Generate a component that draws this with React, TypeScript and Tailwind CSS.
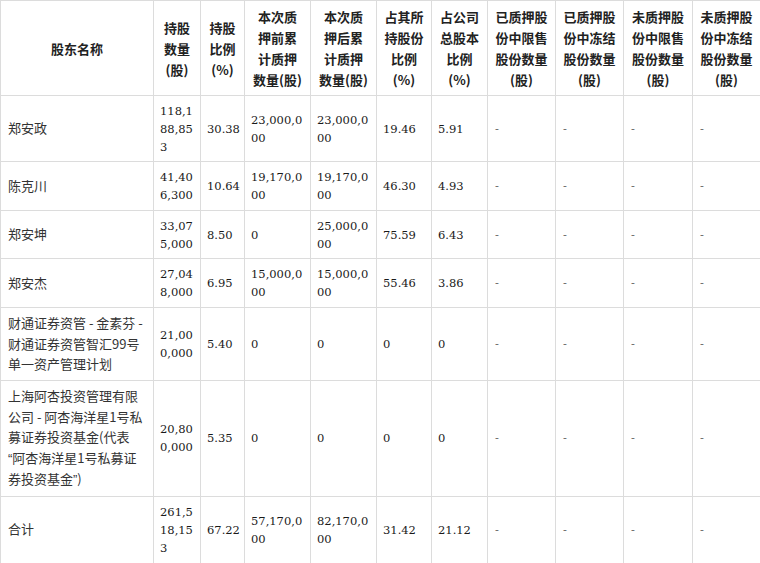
import React from "react";

const cols = [153, 47, 44, 66, 66, 55, 56, 68, 68, 69, 68];

const headers: string[][] = [
  ["股东名称"],
  ["持股", "数量", "(股)"],
  ["持股", "比例", "(%)"],
  ["本次质", "押前累", "计质押", "数量(股)"],
  ["本次质", "押后累", "计质押", "数量(股)"],
  ["占其所", "持股份", "比例", "(%)"],
  ["占公司", "总股本", "比例", "(%)"],
  ["已质押股", "份中限售", "股份数量", "(股)"],
  ["已质押股", "份中冻结", "股份数量", "(股)"],
  ["未质押股", "份中限售", "股份数量", "(股)"],
  ["未质押股", "份中冻结", "股份数量", "(股)"],
];

type Row = { h: number; name: React.ReactNode[]; nums: string[][] };

const q = "font-['Liberation_Sans',sans-serif]";

const rows: Row[] = [
  { h: 66, name: ["郑安政"], nums: [["118,1", "88,85", "3"], ["30.38"], ["23,000,0", "00"], ["23,000,0", "00"], ["19.46"], ["5.91"]] },
  { h: 49, name: ["陈克川"], nums: [["41,40", "6,300"], ["10.64"], ["19,170,0", "00"], ["19,170,0", "00"], ["46.30"], ["4.93"]] },
  { h: 48, name: ["郑安坤"], nums: [["33,07", "5,000"], ["8.50"], ["0"], ["25,000,0", "00"], ["75.59"], ["6.43"]] },
  { h: 49, name: ["郑安杰"], nums: [["27,04", "8,000"], ["6.95"], ["15,000,0", "00"], ["15,000,0", "00"], ["55.46"], ["3.86"]] },
  {
    h: 73,
    name: ["财通证券资管 - 金素芬 -", "财通证券资管智汇99号", "单一资产管理计划"],
    nums: [["21,00", "0,000"], ["5.40"], ["0"], ["0"], ["0"], ["0"]],
  },
  {
    h: 115,
    name: [
      "上海阿杏投资管理有限",
      "公司 - 阿杏海洋星1号私",
      "募证券投资基金(代表",
      <>
        <span className={q}>“</span>阿杏海洋星1号私募证
      </>,
      <>
        券投资基金<span className={q}>”</span>)
      </>,
    ],
    nums: [["20,80", "0,000"], ["5.35"], ["0"], ["0"], ["0"], ["0"]],
  },
  { h: 67, name: ["合计"], nums: [["261,5", "18,15", "3"], ["67.22"], ["57,170,0", "00"], ["82,170,0", "00"], ["31.42"], ["21.12"]] },
];

const cjk = "font-['Noto_Sans_CJK_SC',sans-serif]";
const num = "font-['DejaVu_Serif','Noto_Sans_CJK_SC',serif]";

export default function App() {
  return (
    <div className="bg-white w-[760px] h-[563px] overflow-hidden">
      <table className="border-collapse table-fixed w-[760px] text-[#333]">
        <colgroup>
          {cols.map((w, i) => (
            <col key={i} style={{ width: w }} />
          ))}
        </colgroup>
        <thead>
          <tr className="h-[94px]">
            {headers.map((lines, i) => (
              <th
                key={i}
                className={`border border-[#dcdcdc] px-1 py-[5px] text-center align-middle font-bold text-[13px] leading-[21px] whitespace-nowrap text-[#222] ${cjk}`}
              >
                {lines.map((l, j) => (
                  <div key={j}>{l}</div>
                ))}
              </th>
            ))}
          </tr>
        </thead>
        <tbody>
          {rows.map((r, i) => (
            <tr key={i} style={{ height: r.h }}>
              <td className={`border border-[#dcdcdc] pl-[7px] pr-1 py-[5px] align-middle text-[13px] leading-[20.5px] whitespace-nowrap ${cjk}`}>
                {r.name.map((l, j) => (
                  <div key={j}>{l}</div>
                ))}
              </td>
              {r.nums.map((lines, j) => (
                <td
                  key={j}
                  className={`border border-[#dcdcdc] pl-[6px] pr-0 py-[5px] align-middle text-[11.5px] leading-[18px] whitespace-nowrap text-[#1a1a1a] ${num}`}
                >
                  {lines.map((l, k) => (
                    <div key={k}>{l}</div>
                  ))}
                </td>
              ))}
              {[0, 1, 2, 3].map((k) => (
                <td
                  key={`d${k}`}
                  className={`border border-[#dcdcdc] pl-[7px] py-[5px] align-middle text-[11.5px] leading-[18px] text-[#666] ${num}`}
                >
                  -
                </td>
              ))}
            </tr>
          ))}
        </tbody>
      </table>
    </div>
  );
}
